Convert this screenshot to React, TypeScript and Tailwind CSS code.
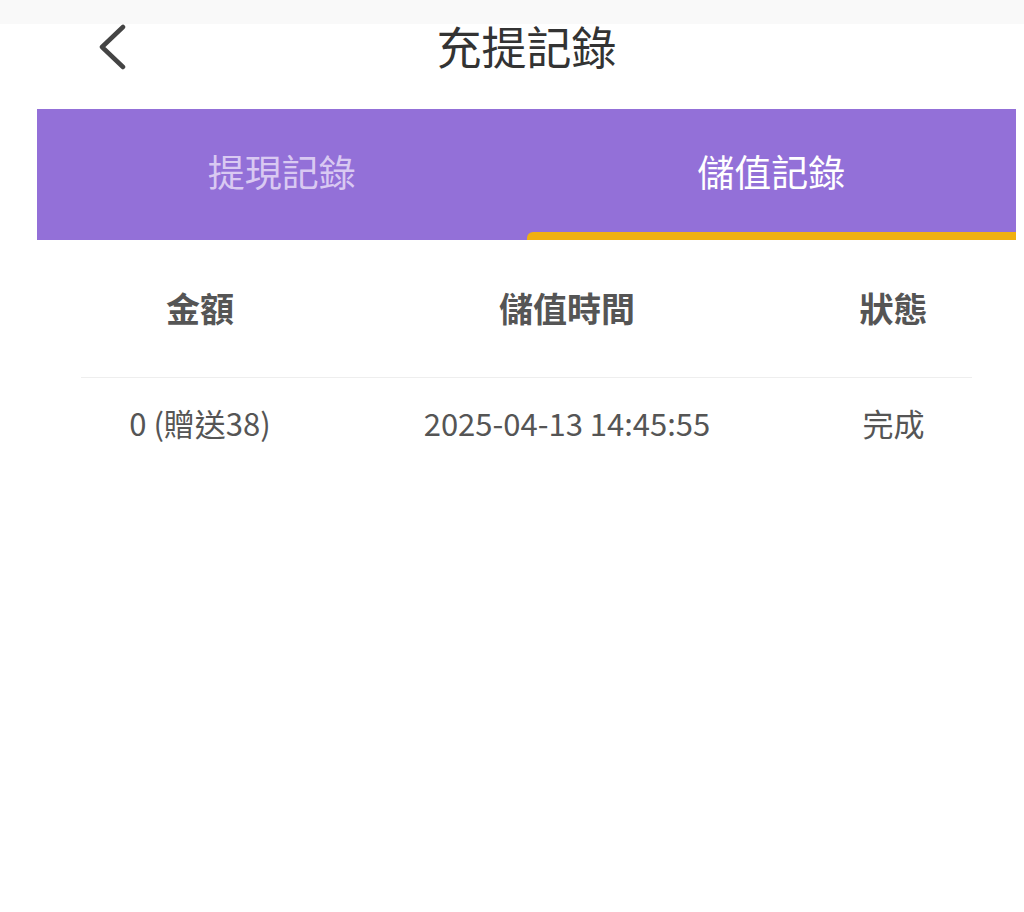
const font = { fontFamily: '"Noto Sans CJK TC", "Noto Sans", sans-serif' };

const App = () => {
  return (
    <div className="min-h-[912px] bg-white text-[#444]" style={font}>
      <div className="h-[24px] bg-[#f9f9f9]" />
      <div className="mx-[37px] w-[979px]">
        {/* Header */}
        <div className="relative flex h-[85px] items-start justify-center">
          <button className="absolute left-[58px] top-0 text-[#444]">
            <svg width="36" height="46" viewBox="0 0 36 46" fill="none">
              <path d="M28 3 L7 23 L28 43" stroke="currentColor" strokeWidth="4.5" strokeLinecap="round" strokeLinejoin="round" />
            </svg>
          </button>
          <h1 className="-mt-[3px] text-[45px] leading-[50px] font-normal text-[#333]">充提記錄</h1>
        </div>

        {/* Tabs */}
        <div className="flex h-[131px] bg-[#9370d8]">
          <div className="flex flex-1 flex-col">
            <div className="flex flex-1 items-center justify-center pt-[2px] text-[37px] text-[#d9c9f2]">提現記錄</div>
            <div className="h-[8px]" />
          </div>
          <div className="flex flex-1 flex-col">
            <div className="flex flex-1 items-center justify-center pt-[2px] text-[37px] text-white">儲值記錄</div>
            <div className="h-[8px] rounded-tl-[6px] bg-[#f0b010]" />
          </div>
        </div>

        {/* Table */}
        <div className="mx-[44px]">
          <div className="grid h-[138px] grid-cols-[238px_496px_157px] items-center border-b border-[#eeeeee] pb-[2px] text-[34px] font-bold text-[#555]">
            <div className="text-center">金額</div>
            <div className="text-center">儲值時間</div>
            <div className="text-center">狀態</div>
          </div>
          <div className="grid h-[90px] grid-cols-[238px_496px_157px] items-center text-[31px] text-[#555]">
            <div className="text-center">0 (贈送38)</div>
            <div className="text-center">2025-04-13 14:45:55</div>
            <div className="text-center">完成</div>
          </div>
        </div>
      </div>
    </div>
  );
};

export default App;
